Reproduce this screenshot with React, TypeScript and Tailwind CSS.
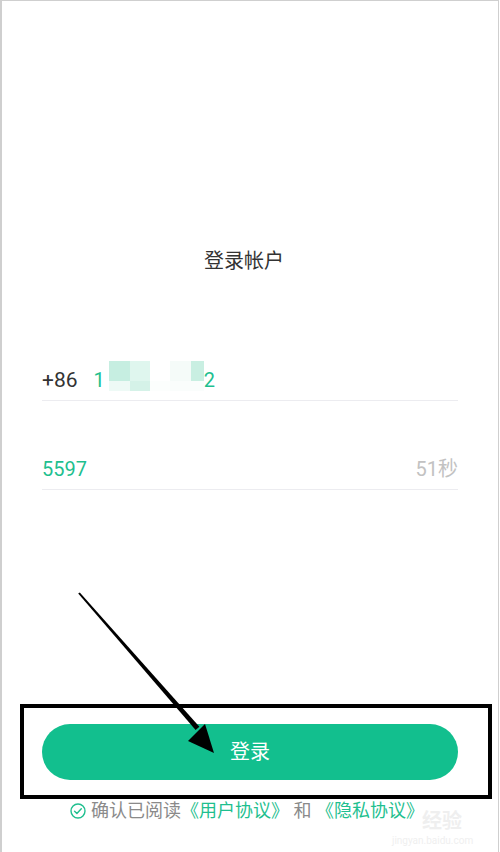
import React from "react";

const blurRows = [
  ["bg-[#c6eee1]", "bg-[#dff6ee]", "bg-white", "bg-[#f5fbf9]", "bg-[#c9efe2]"],
  ["bg-[#eefaf6]", "bg-[#d5f2e8]", "bg-[#fcfefd]", "bg-[#fafdfc]", "bg-[#fafdfc]"],
];
const blurCols = ["w-[21px]", "w-[20px]", "w-[20px]", "w-[21px]", "w-[13px]"];

const App: React.FC = () => {
  return (
    <div
      className="relative w-[499px] h-[852px] bg-white border-l-2 border-t border-r border-[#cfcfcf] overflow-hidden"
      style={{ fontFamily: 'Roboto, "Noto Sans CJK SC", sans-serif' }}
    >
      {/* Title */}
      <h1 className="pt-[246px] pr-[12px] text-center text-[20px] leading-[28px] text-[#333]">登录帐户</h1>

      {/* Form */}
      <div className="px-[40px]">
        <div className="mt-[86px] flex items-end pb-[8px] border-b border-[#ececf0]">
          <span className="text-[21px] leading-[24px] text-[#333]">+86</span>
          <span className="ml-[16px] text-[20px] leading-[24px] text-[#1fbf8f]">1</span>
          <div className="ml-[4px] mb-[1px] flex flex-col">
            {blurRows.map((row, r) => (
              <div key={r} className={r === 0 ? "flex h-[20px]" : "flex h-[10px]"}>
                {row.map((c, i) => (
                  <div key={i} className={`${blurCols[i]} ${c}`} />
                ))}
              </div>
            ))}
          </div>
          <span className="text-[20px] leading-[24px] text-[#1fbf8f]">2</span>
        </div>

        <div className="mt-[56px] flex items-center justify-between pb-[8px] border-b border-[#ececf0]">
          <span className="text-[20px] leading-[24px] text-[#1fbf8f]">5597</span>
          <span className="text-[20px] leading-[24px] text-[#c2c2c2]">51秒</span>
        </div>
      </div>

      {/* Highlighted button */}
      <div className="mt-[214px] ml-[18px] w-[472px] h-[95px] border-4 border-black pl-[18px] pr-[30px] pt-[16px]">
        <button className="w-full h-[56px] rounded-full bg-[#12bf8e] text-white text-[20px] leading-[56px]">
          登录
        </button>
      </div>

      {/* Agreement */}
      <div className="flex items-center justify-center gap-[5px] text-[18px] leading-[24px] pr-[6px]">
        <svg width="16" height="16" viewBox="0 0 16 16" fill="none" stroke="#1fbf8f" strokeWidth="1.4">
          <circle cx="8" cy="8" r="7" />
          <path d="M4.6 8.2l2.3 2.2 4.4-4.6" strokeLinecap="round" strokeLinejoin="round" />
        </svg>
        <span className="text-[#8a8a8a]">
          确认已阅读<span className="text-[#1fbf8f]">《用户协议》</span> 和 <span className="text-[#1fbf8f]">《隐私协议》</span>
        </span>
      </div>

      {/* Watermark */}
      <div className="absolute left-[420px] top-[808px] pointer-events-none select-none text-[#efefef]">
        <div className="text-[20px] leading-[22px] font-bold" style={{ fontFamily: '"Noto Sans CJK SC", sans-serif' }}>
          经验
        </div>
        <div className="text-[10px] leading-[12px] -ml-[30px] mt-[4px]">jingyan.baidu.com</div>
      </div>

      {/* Arrow overlay */}
      <svg className="absolute left-0 top-0 pointer-events-none" width="500" height="852">
        <polygon points="77.8,591.4 76.2,592.6 193.6,729 197.4,725.8" fill="#000" />
        <polygon points="203,723 212,752 186,740" fill="#000" />
      </svg>
    </div>
  );
};

export default App;
